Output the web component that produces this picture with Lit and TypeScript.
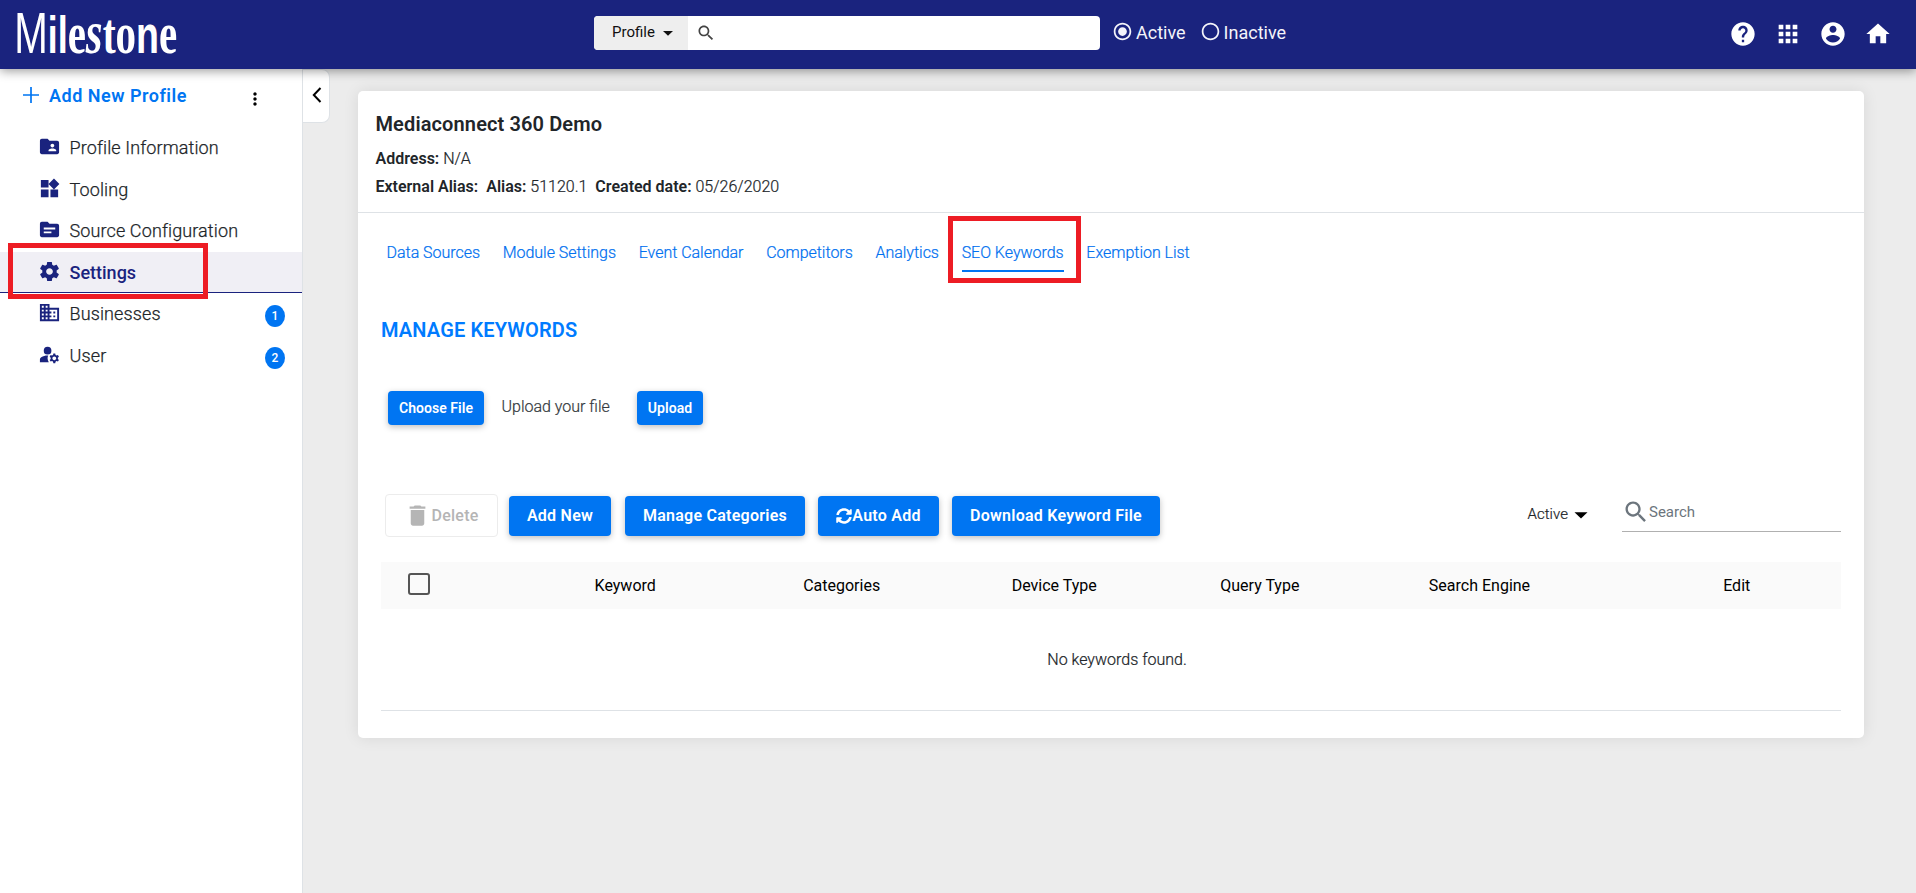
import { LitElement, html, svg, css } from "lit";
import { customElement, property } from "lit/decorators.js";

const ICONS: Record<string, string> = {
  help: "M12 2C6.48 2 2 6.48 2 12s4.48 10 10 10 10-4.48 10-10S17.52 2 12 2zm1 17h-2v-2h2v2zm2.07-7.75l-.9.92C13.45 12.9 13 13.5 13 15h-2v-.5c0-1.1.45-2.1 1.17-2.83l1.24-1.26c.37-.36.59-.86.59-1.41 0-1.1-.9-2-2-2s-2 .9-2 2H8c0-2.21 1.79-4 4-4s4 1.79 4 4c0 .88-.36 1.68-.93 2.25z",
  apps: "M4 8h4V4H4v4zm6 12h4v-4h-4v4zm-6 0h4v-4H4v4zm0-6h4v-4H4v4zm6 0h4v-4h-4v4zm6-10v4h4V4h-4zm-6 4h4V4h-4v4zm6 6h4v-4h-4v4zm0 6h4v-4h-4v4z",
  account: "M12 2C6.48 2 2 6.48 2 12s4.48 10 10 10 10-4.48 10-10S17.52 2 12 2zm0 3c1.66 0 3 1.34 3 3s-1.34 3-3 3-3-1.34-3-3 1.34-3 3-3zm0 14.2c-2.5 0-4.71-1.28-6-3.22.03-1.99 4-3.08 6-3.08 1.99 0 5.97 1.09 6 3.08-1.29 1.94-3.5 3.22-6 3.22z",
  home: "M10 20v-6h4v6h5v-8h3L12 3 2 12h3v8z",
  search: "M15.5 14h-.79l-.28-.27C15.41 12.59 16 11.11 16 9.5 16 5.91 13.09 3 9.5 3S3 5.91 3 9.5 5.91 16 9.5 16c1.61 0 3.09-.59 4.23-1.57l.27.28v.79l5 4.99L20.49 19l-4.99-5zm-6 0C7.01 14 5 11.99 5 9.5S7.01 5 9.5 5 14 7.01 14 9.5 11.99 14 9.5 14z",
  radioOn: "M12 7c-2.76 0-5 2.24-5 5s2.24 5 5 5 5-2.24 5-5-2.24-5-5-5zm0-5C6.48 2 2 6.48 2 12s4.48 10 10 10 10-4.48 10-10S17.52 2 12 2zm0 18c-4.42 0-8-3.58-8-8s3.58-8 8-8 8 3.58 8 8-3.58 8-8 8z",
  radioOff: "M12 2C6.48 2 2 6.48 2 12s4.48 10 10 10 10-4.48 10-10S17.52 2 12 2zm0 18c-4.42 0-8-3.58-8-8s3.58-8 8-8 8 3.58 8 8-3.58 8-8 8z",
  folderShared: "M20 6h-8l-2-2H4c-1.1 0-1.99.9-1.99 2L2 18c0 1.1.9 2 2 2h16c1.1 0 2-.9 2-2V8c0-1.1-.9-2-2-2zm-5 3c1.1 0 2 .9 2 2s-.9 2-2 2-2-.9-2-2 .9-2 2-2zm4 8h-8v-1c0-1.33 2.67-2 4-2s4 .67 4 2v1z",
  widgets: "M13 13v8h8v-8h-8zM3 21h8v-8H3v8zM3 3v8h8V3H3zm13.66-1.31L11 7.34 16.66 13l5.66-5.66-5.66-5.65z",
  source: "M20 6h-8l-2-2H4c-1.1 0-1.99.9-1.99 2L2 18c0 1.1.9 2 2 2h16c1.1 0 2-.9 2-2V8c0-1.1-.9-2-2-2zm-6 10H6v-2h8v2zm4-4H6v-2h12v2z",
  settings: "M19.43 12.98c.04-.32.07-.64.07-.98s-.03-.66-.07-.98l2.11-1.65c.19-.15.24-.42.12-.64l-2-3.46c-.12-.22-.39-.3-.61-.22l-2.49 1c-.52-.4-1.08-.73-1.69-.98l-.38-2.65C14.46 2.18 14.25 2 14 2h-4c-.25 0-.46.18-.49.42l-.38 2.65c-.61.25-1.17.59-1.69.98l-2.49-1c-.23-.09-.49 0-.61.22l-2 3.46c-.13.22-.07.49.12.64l2.11 1.65c-.04.32-.07.65-.07.98s.03.66.07.98l-2.11 1.65c-.19.15-.24.42-.12.64l2 3.46c.12.22.39.3.61.22l2.49-1c.52.4 1.08.73 1.69.98l.38 2.65c.03.24.24.42.49.42h4c.25 0 .46-.18.49-.42l.38-2.65c.61-.25 1.17-.59 1.69-.98l2.49 1c.23.09.49 0 .61-.22l2-3.46c.12-.22.07-.49-.12-.64l-2.11-1.65zM12 15.5c-1.93 0-3.5-1.57-3.5-3.5s1.57-3.5 3.5-3.5 3.5 1.57 3.5 3.5-1.57 3.5-3.5 3.5z",
  domain: "M12 7V3H2v18h20V7H12zM6 19H4v-2h2v2zm0-4H4v-2h2v2zm0-4H4V9h2v2zm0-4H4V5h2v2zm4 12H8v-2h2v2zm0-4H8v-2h2v2zm0-4H8V9h2v2zm0-4H8V5h2v2zm10 12h-8v-2h2v-2h-2v-2h2v-2h-2V9h8v10zm-2-8h-2v2h2v-2zm0 4h-2v2h2v-2z",
  manage: "M10 4a4 4 0 1 0 0 8a4 4 0 1 0 0-8zM10.67 13.02C10.45 13.01 10.23 13 10 13c-2.42 0-4.68.67-6.61 1.82C2.51 15.34 2 16.32 2 17.35V20h9.26c-.79-1.13-1.26-2.51-1.26-4 0-1.07.25-2.07.67-2.98zM20.75 16c0-.22-.03-.42-.06-.63l1.14-1.01-1-1.73-1.45.49c-.32-.27-.68-.48-1.08-.63L18 11h-2l-.3 1.49c-.4.15-.76.36-1.08.63l-1.45-.49-1 1.73 1.14 1.01c-.03.21-.06.41-.06.63s.03.42.06.63l-1.14 1.01 1 1.73 1.45-.49c.32.27.68.48 1.08.63L16 21h2l.3-1.49c.4-.15.76-.36 1.08-.63l1.45.49 1-1.73-1.14-1.01c.03-.21.06-.41.06-.63zM17 18c-1.1 0-2-.9-2-2s.9-2 2-2 2 .9 2 2-.9 2-2 2z",
  dots: "M12 8c1.1 0 2-.9 2-2s-.9-2-2-2-2 .9-2 2 .9 2 2 2zm0 2c-1.1 0-2 .9-2 2s.9 2 2 2 2-.9 2-2-.9-2-2-2zm0 6c-1.1 0-2 .9-2 2s.9 2 2 2 2-.9 2-2-.9-2-2-2z",
  trash: "M6 19c0 1.1.9 2 2 2h8c1.1 0 2-.9 2-2V7H6v12zM19 4h-3.5l-1-1h-5l-1 1H5v2h14V4z",
  caret: "M6 9.5l6 5.8 6-5.8z",
};

@customElement("ui-icon")
class UiIcon extends LitElement {
  @property() name = "";
  @property({ type: Number }) size = 24;
  static styles = css`
    :host { display: inline-flex; flex: none; }
    svg { display: block; fill: currentColor; }
  `;
  render() {
    return html`<svg viewBox="0 0 24 24" width=${this.size} height=${this.size}><path d=${ICONS[this.name]}></path></svg>`;
  }
}

@customElement("brand-logo")
class BrandLogo extends LitElement {
  static styles = css`
    :host { display: block; flex: none; }
    svg { display: block; fill: #fff; overflow: visible; }
    .sans { font-family: "Liberation Sans", sans-serif; }
    .serif { font-family: "Liberation Serif", serif; font-weight: 700; }
    .bold { font-weight: 700; }
    .swash { font-style: italic; }
  `;
  render() {
    const glyph = (ch: string, size: number, cls: string) =>
      svg`<tspan class=${cls} font-size=${size}>${ch}</tspan>`;
    return html`<svg width="180" height="69" viewBox="0 0 180 69">
      <text transform="translate(14.2 53) scale(.695 1)">${glyph("M", 58, "sans")}${glyph("i", 51, "sans bold")}${glyph("l", 52, "sans bold")}${glyph("e", 59, "serif")}${glyph("s", 62, "serif swash")}${glyph("t", 56, "serif")}${glyph("o", 59, "serif")}${glyph("n", 54, "sans bold")}${glyph("e", 59, "serif")}</text>
    </svg>`;
  }
}

@customElement("top-bar")
class TopBar extends LitElement {
  static styles = css`
    :host { display: flex; align-items: center; height: 69px; background: #1a237e; color: #fff; box-shadow: 0 2px 10px rgba(0,0,0,.4); }
    .search { display: flex; width: 506px; height: 34px; margin: -3px 14px 0 414px; border-radius: 4px; overflow: hidden; background: #fff; color: #111; }
    .scope { display: flex; align-items: center; width: 76px; padding-left: 18px; gap: 1px; background: #eee; font-size: 15px; line-height: 32px; }
    .scope span { margin-top: -2px; }
    .scope ui-icon { margin: 0 0 0 2px; }
    .glass { margin: 7px 0 0 8px; color: #444; }
    .radio { display: flex; align-items: center; font-size: 18px; gap: 3px; margin: -6px 16px 0 -2px; color: #f4f4fa; }
    .radio span { margin-top: 2px; }
    .tools { display: flex; gap: 17px; margin: -2px 24px 0 auto; }
  `;
  render() {
    return html`
      <brand-logo></brand-logo>
      <div class="search">
        <div class="scope"><span>Profile</span><ui-icon name="caret" size="20"></ui-icon></div>
        <ui-icon class="glass" name="search" size="20"></ui-icon>
      </div>
      <div class="radio"><ui-icon name="radioOn" size="21"></ui-icon><span>Active</span></div>
      <div class="radio"><ui-icon name="radioOff" size="21"></ui-icon><span>Inactive</span></div>
      <div class="tools">
        ${["help", "apps", "account", "home"].map((n) => html`<ui-icon name=${n} size="28"></ui-icon>`)}
      </div>`;
  }
}

interface NavItem { icon: string; label: string; count?: number; active?: boolean; }
const NAV: NavItem[] = [
  { icon: "folderShared", label: "Profile Information" },
  { icon: "widgets", label: "Tooling" },
  { icon: "source", label: "Source Configuration" },
  { icon: "settings", label: "Settings", active: true },
  { icon: "domain", label: "Businesses", count: 1 },
  { icon: "manage", label: "User", count: 2 },
];

@customElement("side-nav")
class SideNav extends LitElement {
  static styles = css`
    :host { display: block; box-sizing: border-box; width: 303px; flex: none; background: #fff; border-right: 1px solid #dee2e6; }
    .add { display: flex; align-items: center; height: 52px; margin-bottom: 6.2px; padding-left: 23px; color: #0075f2; font-size: 18px; font-weight: 600; letter-spacing: .5px; }
    .add svg { margin-right: 10px; }
    .add span { width: 196px; }
    .add ui-icon { color: #000; margin: 7px 0 0 0; }
    .item { position: relative; display: flex; align-items: center; box-sizing: border-box; height: 41.6px; padding: 0 17px 0 38px; border-bottom: 1px solid transparent; color: #212529; font-size: 18px; font-weight: 300; letter-spacing: .12px; -webkit-text-stroke: .25px currentColor; }
    .item ui-icon { color: #1a237e; margin: -2px 8.5px 0 0; }
    .active { height: 41px; margin-bottom: .6px; background: #f0eff5; border-color: #1a237e; color: #1a237e; font-weight: 500; letter-spacing: 0; -webkit-text-stroke: 0; padding-top: 1px; }
    .count { display: flex; align-items: center; justify-content: center; width: 20px; height: 22px; margin: 5px 0 0 auto; border-radius: 50%; background: #0075f2; color: #fff; font-size: 12px; font-weight: 500; -webkit-text-stroke: 0; letter-spacing: 0; }
    .mark { position: absolute; left: 8px; top: -9px; box-sizing: border-box; width: 200px; height: 56px; border: 5px solid #ed1c24; z-index: 2; }
  `;
  render() {
    return html`
      <div class="add">
        <svg width="16" height="16" viewBox="0 0 16 16" stroke="#0075f2" stroke-width="1.7"><path d="M8 0V16M0 8H16"></path></svg>
        <span>Add New Profile</span><ui-icon name="dots" size="20"></ui-icon>
      </div>
      ${NAV.map((i) => html`<div class="item ${i.active ? "active" : ""}">
        <ui-icon name=${i.icon} size="23"></ui-icon><span>${i.label}</span>
        ${i.count ? html`<span class="count">${i.count}</span>` : ""}
        ${i.active ? html`<div class="mark"></div>` : ""}
      </div>`)}`;
  }
}

const TABS = ["Data Sources", "Module Settings", "Event Calendar", "Competitors", "Analytics", "SEO Keywords", "Exemption List"];

@customElement("keyword-card")
class KeywordCard extends LitElement {
  static styles = css`
    :host { display: block; box-sizing: border-box; width: 1506px; height: 647px; margin: 22px 0 0 28px; background: #fff; border-radius: 5px; box-shadow: 0 0 16px rgba(0,0,0,.09); color: #212529; font-size: 16px; }
    b { font-weight: 600; -webkit-text-stroke: 0; }
    .head { box-sizing: border-box; height: 122px; padding: 19px 17.5px 0; border-bottom: 1px solid #dee2e6; }
    h1 { margin: 0; font-size: 20px; line-height: 28px; font-weight: 600; letter-spacing: .12px; }
    .line, .tabs, .hint, .state, .empty { font-weight: 300; -webkit-text-stroke: .22px currentColor; }
    .line { display: flex; gap: 8px; line-height: 28px; }
    .first { margin-top: 7px; }
    .tabs { display: flex; gap: 22.7px; padding: 28px 0 0 28.5px; color: #0070f0; line-height: 24px; letter-spacing: -.025px; }
    .tab { position: relative; box-sizing: border-box; height: 31px; white-space: nowrap; }
    .current { border-bottom: 2px solid #0075f2; }
    .mark { position: absolute; left: -14px; top: -25px; box-sizing: border-box; width: 133px; height: 67px; border: 5px solid #ed1c24; }
    .body { padding: 0 23px; }
    h2 { margin: 44px 0 0; color: #007bff; font-size: 20px; line-height: 28px; font-weight: 600; letter-spacing: .15px; }
    .btn { display: flex; align-items: center; justify-content: center; box-sizing: border-box; border-radius: 4px; background: #0075f2; color: #fff; font-weight: 600; white-space: nowrap; letter-spacing: .25px; box-shadow: 0 2px 6px rgba(0,0,0,.25); }
    .upload { display: flex; align-items: center; height: 34px; padding-left: 7px; margin-top: 47px; }
    .upload .btn { height: 34px; font-size: 14px; letter-spacing: .05px; }
    .choose { width: 96px; }
    .up { width: 66px; }
    .hint { width: 135px; box-sizing: border-box; padding: 0 0 4px 17.5px; margin-right: 18px; white-space: nowrap; color: #343a40; }
    .bar { display: flex; align-items: center; height: 43px; margin-top: 69px; padding-left: 4px; }
    .bar .btn { height: 40px; margin: 1px 0 0; padding-bottom: 1px; }
    .del { width: 113px; height: 43px !important; margin: 0 11px 0 0 !important; background: #fff; border: 1px solid #ececec; box-shadow: none; color: #b5b5b5; font-weight: 500; }
    .new { width: 102px; }
    .cat { width: 180px; margin-left: 14px !important; }
    .auto { width: 121px; margin-left: 13px !important; }
    .dl { width: 208px; margin-left: 13px !important; }
    .state { display: flex; align-items: center; margin: -3px 28px 0 auto; font-size: 15px; letter-spacing: .05px; }
    .state ui-icon { color: #000; margin-top: 1px; }
    .find { display: flex; align-items: center; box-sizing: border-box; width: 219px; height: 42px; margin-top: -9px; padding-top: 2px; border-bottom: 1px solid #b0b0b0; color: #6c757d; font-size: 15px; }
    .find ui-icon { margin-right: -1px; }
    .grid { display: grid; grid-template-columns: repeat(7, 1fr); align-items: center; height: 47px; margin-top: 25px; background: #fafafa; color: #000; font-weight: 400; }
    .grid span { padding-left: 5px; }
    .grid .edit { padding: 0; text-align: center; }
    .check { box-sizing: border-box; width: 22px; height: 22px; margin: -3px 0 0 27px; border: 2px solid #555; border-radius: 3px; }
    .empty { box-sizing: border-box; height: 102px; border-bottom: 1px solid #dee2e6; padding-left: 12px; text-align: center; line-height: 102px; }
  `;
  render() {
    return html`
      <div class="head">
        <h1>Mediaconnect 360 Demo</h1>
        <div class="line first"><span><b>Address:</b> N/A</span></div>
        <div class="line"><b>External Alias:</b><span><b>Alias:</b> 51120.1</span><span><b>Created date:</b> 05/26/2020</span></div>
      </div>
      <div class="tabs">
        ${TABS.map((t) => t === "SEO Keywords"
          ? html`<div class="tab current">${t}<div class="mark"></div></div>`
          : html`<div class="tab">${t}</div>`)}
      </div>
      <div class="body">
        <h2>MANAGE KEYWORDS</h2>
        <div class="upload">
          <div class="btn choose">Choose File</div><div class="hint">Upload your file</div><div class="btn up">Upload</div>
        </div>
        <div class="bar">
          <div class="btn del"><ui-icon name="trash" size="27"></ui-icon>Delete</div>
          <div class="btn new">Add New</div>
          <div class="btn cat">Manage Categories</div>
          <div class="btn auto">
            <svg width="16" height="16" viewBox="0 0 512 512" fill="currentColor"><path d="M370.72 133.28C339.458 104.008 298.888 87.962 255.848 88c-77.458.068-144.328 53.178-162.791 126.85-1.344 5.363-6.122 9.15-11.651 9.15H24.103c-7.498 0-13.194-6.807-11.807-14.176C33.933 94.924 134.813 8 256 8c66.448 0 126.791 26.136 171.315 68.685L463.03 40.97C478.149 25.851 504 36.559 504 57.941V192c0 13.255-10.745 24-24 24H345.941c-21.382 0-32.09-25.851-16.971-40.971l41.75-41.749zM32 296h134.059c21.382 0 32.09 25.851 16.971 40.971l-41.75 41.75c31.262 29.273 71.835 45.319 114.876 45.28 77.418-.07 144.315-53.144 162.787-126.849 1.344-5.363 6.122-9.15 11.651-9.15h57.304c7.498 0 13.194 6.807 11.807 14.176C478.067 417.076 377.187 504 256 504c-66.448 0-126.791-26.136-171.315-68.685L48.97 471.03C33.851 486.149 8 475.441 8 454.059V320c0-13.255 10.745-24 24-24z"></path></svg>Auto Add</div>
          <div class="btn dl">Download Keyword File</div>
          <div class="state">Active<ui-icon name="caret" size="26"></ui-icon></div>
          <div class="find"><ui-icon name="search" size="28"></ui-icon>Search</div>
        </div>
        <div class="grid">
          <div class="check"></div>
          ${["Keyword", "Categories", "Device Type", "Query Type", "Search Engine"].map((c) => html`<span>${c}</span>`)}
          <span class="edit">Edit</span>
        </div>
        <div class="empty">No keywords found.</div>
      </div>`;
  }
}

@customElement("app-root")
class AppRoot extends LitElement {
  static styles = css`
    :host { display: flex; flex-direction: column; height: 100vh; overflow: hidden; background: #ececec; font-family: Roboto, sans-serif; }
    top-bar { position: relative; z-index: 3; flex: none; }
    main { display: flex; flex: 1; align-items: flex-start; }
    side-nav { height: 100%; }
    .collapse { display: flex; align-items: center; justify-content: center; box-sizing: border-box; width: 27px; height: 54px; background: #fff; border: 1px solid #dee2e6; border-left: 0; border-radius: 0 8px 8px 0; }
    .collapse svg { margin: -3px 0 0 1px; }
  `;
  render() {
    return html`
      <top-bar></top-bar>
      <main>
        <side-nav></side-nav>
        <div class="collapse"><svg width="10" height="16" viewBox="0 0 10 16" fill="none" stroke="#000" stroke-width="2"><path d="M8.5 1L1.8 8L8.5 15"></path></svg></div>
        <keyword-card></keyword-card>
      </main>`;
  }
}
